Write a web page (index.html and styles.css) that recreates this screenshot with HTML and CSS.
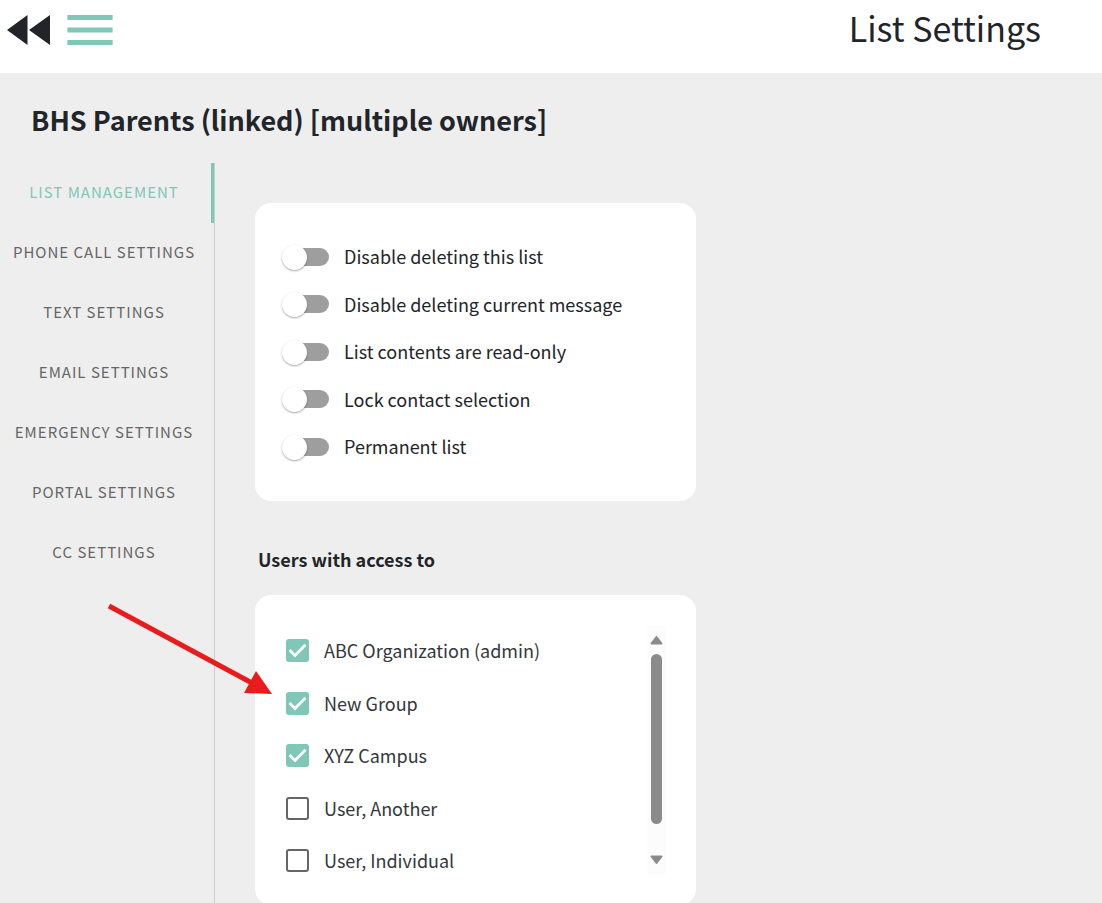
FILE: index.html
```html
<!DOCTYPE html>
<html lang="en">
<head>
<meta charset="utf-8">
<title>List Settings</title>
<meta name="viewport" content="width=device-width, initial-scale=1">
<link rel="stylesheet" href="styles.css">
</head>
<body>
<div class="app">
  <header class="topbar">
    <div class="topbar-actions">
      <button class="icon-button" type="button" aria-label="Back">
        <svg width="44" height="30" viewBox="0 0 44 30" fill="#212529"><path d="M0 15 20.500 0V30ZM22 15 43 0V30Z"/></svg>
      </button>
      <button class="icon-button" type="button" aria-label="Menu">
        <svg width="46" height="30" viewBox="0 0 46 30" fill="#80c7b7"><path d="M.4 0H45.600V5H.4ZM.4 12.400H45.600V17.600H.4ZM.4 25H45.600V30H.4Z"/></svg>
      </button>
    </div>
    <h1 class="page-title">List Settings</h1>
  </header>
  <main class="main">
    <h2 class="list-name">BHS Parents (linked) [multiple owners]</h2>
    <div class="columns">
      <nav class="tabs" aria-label="Settings sections">
        <a class="tab tab-active" href="#list" aria-current="page">LIST MANAGEMENT</a>
        <a class="tab" href="#phone">PHONE CALL SETTINGS</a>
        <a class="tab" href="#text">TEXT SETTINGS</a>
        <a class="tab" href="#email">EMAIL SETTINGS</a>
        <a class="tab" href="#emergency">EMERGENCY SETTINGS</a>
        <a class="tab" href="#portal">PORTAL SETTINGS</a>
        <a class="tab" href="#cc">CC SETTINGS</a>
      </nav>
      <div class="content">
        <section class="card switches">
          <label class="row"><input class="switch" type="checkbox">Disable deleting this list</label>
          <label class="row"><input class="switch" type="checkbox">Disable deleting current message</label>
          <label class="row"><input class="switch" type="checkbox">List contents are read-only</label>
          <label class="row"><input class="switch" type="checkbox">Lock contact selection</label>
          <label class="row"><input class="switch" type="checkbox">Permanent list</label>
        </section>
        <h3 class="section-title">Users with access to</h3>
        <section class="card access">
          <div class="users">
            <label class="row"><input class="check" type="checkbox" checked>ABC Organization (admin)</label>
            <label class="row"><input class="check" type="checkbox" checked>New Group</label>
            <label class="row"><input class="check" type="checkbox" checked>XYZ Campus</label>
            <label class="row"><input class="check" type="checkbox">User, Another</label>
            <label class="row"><input class="check" type="checkbox">User, Individual</label>
          </div>
          <div class="scrollbar" aria-hidden="true">
            <svg width="13" height="10" viewBox="0 0 13 10"><path d="M6.500 2 11.500 8.500H1.500Z"/></svg>
            <div class="scroll-track"><div class="scroll-thumb"></div></div>
            <svg width="13" height="10" viewBox="0 0 13 10"><path d="M6.500 8 11.500 1.500H1.500Z"/></svg>
          </div>
        </section>
      </div>
    </div>
    <svg class="pointer" width="166" height="96" viewBox="0 0 166 96" aria-hidden="true">
      <path d="M3 6 146 83" stroke="#e81c1c" stroke-width="5"/>
      <path d="M166 94 150 71 138 93Z" fill="#e81c1c"/>
    </svg>
  </main>
</div>
</body>
</html>
```
FILE: styles.css
```css
* { box-sizing: border-box; }

body {
  margin: 0;
  color: #212529;
  font-family: "Noto Sans CJK SC", "Noto Sans", sans-serif;
  font-size: 18px;
}

h1, h2, h3 { margin: 0; }

.app {
  display: flex;
  flex-direction: column;
  height: 100vh;
}

.topbar {
  display: flex;
  flex: none;
  align-items: flex-start;
  justify-content: space-between;
  height: 73px;
  padding: 0 61px 0 7px;
  background: #fff;
}

.topbar-actions {
  display: flex;
  gap: 16px;
  padding-top: 15px;
}

.icon-button {
  display: block;
  padding: 0;
  border: 0;
  background: none;
  cursor: pointer;
}

.icon-button svg { display: block; }

.page-title {
  font-size: 34px;
  font-weight: 400;
  line-height: 56px;
}

.main {
  position: relative;
  display: flex;
  flex: 1;
  flex-direction: column;
  min-height: 0;
  overflow: hidden auto;
  scrollbar-width: none;
  background: #eee;
}

.list-name {
  padding: 27px 31px 23px;
  font-size: 27px;
  font-weight: 700;
  line-height: 40px;
}

.columns {
  display: flex;
  flex: 1 0 auto;
}

.tabs {
  flex: none;
  width: 215px;
  border-right: 1px solid #ccc;
}

.tab {
  display: block;
  padding: 0 3px 2px 0;
  border-right: 3px solid transparent;
  color: #666;
  font-size: 15px;
  letter-spacing: 1px;
  line-height: 58px;
  text-align: center;
  text-decoration: none;
}

.tab-active {
  border-right-color: #80c7b7;
  color: #80c7b7;
}

.content {
  flex: 1;
  min-width: 0;
  padding: 40px 40px 0;
}

.card {
  display: flex;
  max-width: 441px;
  border-radius: 16px;
  background: #fff;
}

.row {
  display: flex;
  align-items: center;
  gap: 15px;
  line-height: 27px;
}

.switches {
  flex-direction: column;
  justify-content: space-between;
  min-height: 298px;
  padding: 40px 29px 41px;
}

.switch {
  position: relative;
  flex: none;
  width: 45px;
  height: 18px;
  margin: 0;
  border-radius: 9px;
  background: #9e9e9e;
  appearance: none;
}

.switch::before {
  content: "";
  position: absolute;
  top: -3px;
  left: -2px;
  width: 25px;
  height: 25px;
  border-radius: 50%;
  background: #fff;
  box-shadow: 0 1px 2px rgba(0, 0, 0, 0.35);
}

.switch:checked::before {
  right: -2px;
  left: auto;
  background: #80c7b7;
}

.section-title {
  padding: 44px 3px 22px;
  font-size: 18px;
  font-weight: 700;
  line-height: 28px;
}

.access {
  justify-content: space-between;
  padding: 31px 30px 31px 31px;
}

.users {
  display: flex;
  flex: 1;
  flex-direction: column;
  justify-content: space-between;
  min-height: 248px;
  padding-top: 11px;
  color: #33373b;
}

.check {
  flex: none;
  width: 23px;
  height: 23px;
  margin: 0;
  border: 2px solid #666;
  border-radius: 3px;
  appearance: none;
}

.check:checked {
  border: 0;
  background: #80c7b7 url("data:image/svg+xml,%3Csvg xmlns='http://www.w3.org/2000/svg' viewBox='0 0 23 23'%3E%3Cpath d='M3.500 11 9 16.500 19.500 5.800' fill='none' stroke='white' stroke-width='2.800'/%3E%3C/svg%3E");
}

.scrollbar {
  display: flex;
  flex-direction: column;
  align-items: center;
  width: 19px;
  padding: 9px 0;
  background: #fcfcfc;
}

.scrollbar svg {
  fill: #8b8b8b;
  stroke: #8b8b8b;
  stroke-linejoin: round;
  stroke-width: 2;
}

.scroll-track {
  flex: 1;
  padding: 9px 0 31px;
}

.scroll-thumb {
  width: 11px;
  height: 100%;
  border-radius: 6px;
  background: #8b8b8b;
}

/* Callout arrow laid over the page */
.pointer {
  position: absolute;
  top: 527px;
  left: 106px;
  pointer-events: none;
}
```
